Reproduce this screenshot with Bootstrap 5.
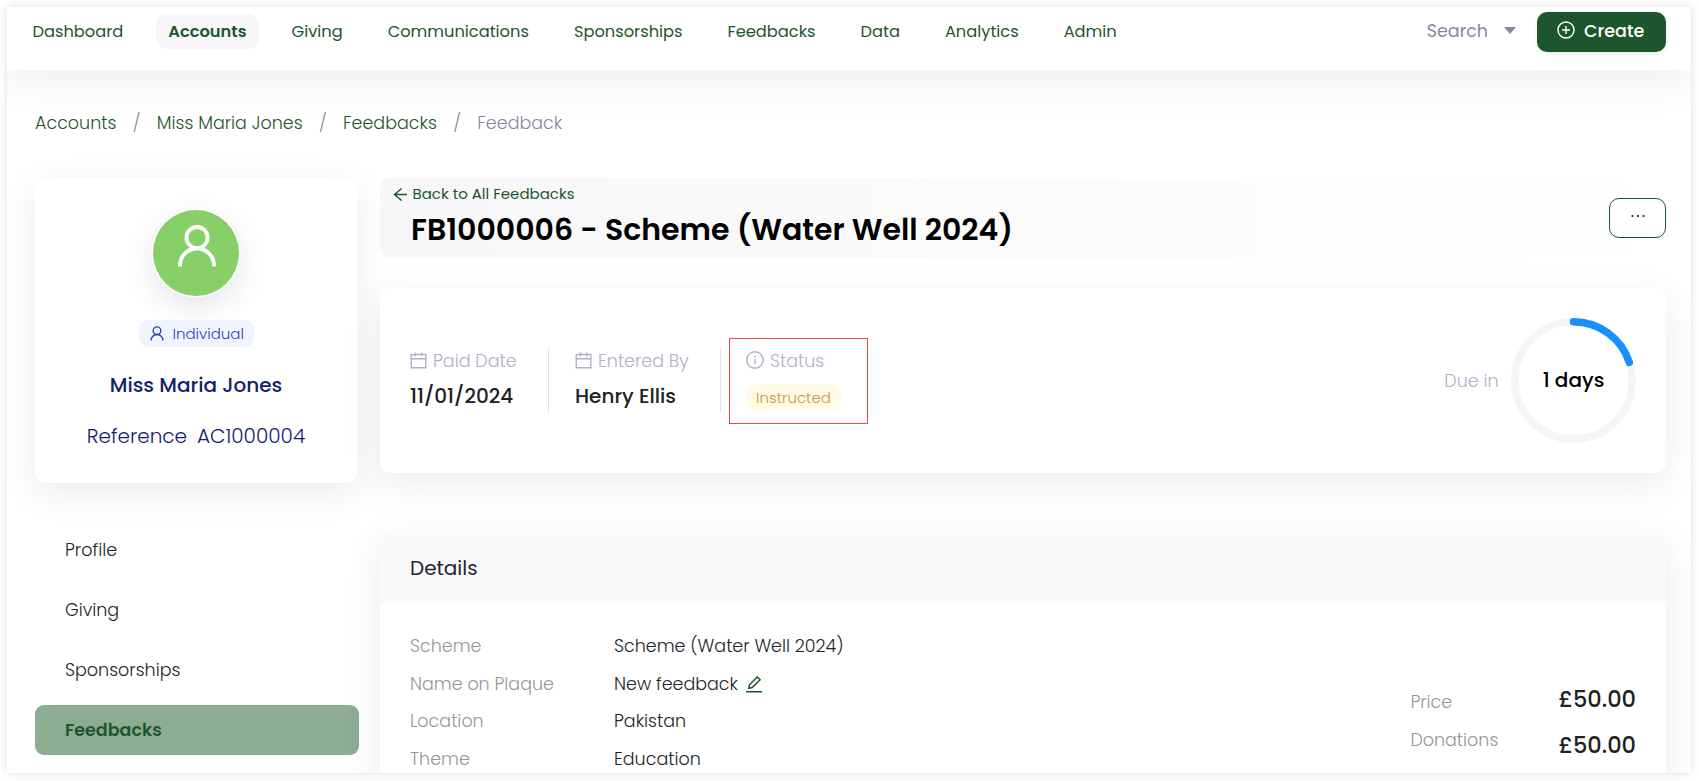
<!DOCTYPE html>
<html lang="en">
<head>
<meta charset="utf-8">
<meta name="viewport" content="width=device-width, initial-scale=1">
<title>FB1000006 - Scheme (Water Well 2024)</title>
<link href="https://cdn.jsdelivr.net/npm/bootstrap@5.3.0/dist/css/bootstrap.min.css" rel="stylesheet">
<style>
:root { --brand: #1d562c; --muted-c: #b0b0c8; --soft: 0 10px 34px rgba(60, 70, 120, .10); }
body { font-family: Poppins, Inter, sans-serif; font-weight: 300; font-size: 17.5px; color: #212529; background: #fff; padding: 7px 8px 8px 7px; height: 781px; overflow: hidden; }
svg { fill: none; stroke: currentColor; flex: none; }
.window { height: 766px; overflow: hidden; background: #fff; box-shadow: 0 0 9px rgba(0, 0, 0, .13); }
.topbar { height: 63px; padding: 0 25px 0 13px; box-shadow: 0 10px 40px rgba(60, 70, 110, .095); position: relative; }
.topbar .nav { gap: 20px; padding-top: 7px; }
.topbar .nav-link { color: var(--brand); font-size: 16.25px; font-weight: 400; line-height: 35px; padding: 0 12.5px; border-radius: 10px; white-space: nowrap; }
.topbar .nav-link.active { background: #f7f7f9; font-weight: 600; }
.search-box { padding-top: 7px; color: #87879f; font-weight: 400; line-height: 35px; }
.caret-down { border: 6.5px solid transparent; border-top: 7px solid #87879f; border-bottom: 0; margin: 0 21px 2px 16px; }
.btn-create { width: 129px; height: 40px; border-radius: 10px; background: var(--brand); color: #fff; font-size: 17.5px; font-weight: 500; padding: 0 0 2px 19px; gap: 9px; margin-top: 5px; box-shadow: 0 2px 4px rgba(0,0,0,.08); }
.btn-create svg { margin-bottom: 2px; }
.content-area { padding: 0 25px 0 28px; }
.crumbs { height: 108px; padding-top: 40px; line-height: 26px; }
.crumbs a { color: var(--brand); text-decoration: none; }
.crumbs .sep { color: #87879f; width: 40.4px; text-align: center; }
.crumbs .here { color: #87879f; }
.side { width: 322px; flex: none; }
.panel { background: #fff; border-radius: 10px; box-shadow: var(--soft); }
.profile { height: 305px; padding-top: 32px; color: #12206f; }
.avatar { width: 86px; height: 86px; border-radius: 50%; padding: 15px 0 0 1px; color: #fff; background: #87d068; box-shadow: 0 0 0 1.5px #fff, 0 10px 30px rgba(60, 40, 110, .14); }
.tag-kind { height: 27px; width: 115px; border-radius: 9px; background: #f0f4ff; color: #2f3ec4; font-size: 15px; margin-top: 24px; padding: 2px 0 0 11px; gap: 9px; }
.tag-kind svg { margin-bottom: 2px; }
.person { font-size: 20px; font-weight: 500; line-height: 30px; margin-top: 23px; }
.refline { font-size: 20px; line-height: 30px; margin-top: 21px; gap: 10px; }
.side-nav { margin-top: 42px; width: 324px; gap: 10px; }
.side-nav .nav-link { height: 50px; line-height: 50px; padding: 0 0 0 30px; color: #212529; border-radius: 9px; }
.side-nav .nav-link.active { background: #8dad92; color: var(--brand); font-weight: 600; }
.main-col { margin-left: 23px; flex: 1; min-width: 0; }
.title-bar { height: 80px; border-radius: 10px; background: linear-gradient(90deg, #f7f7f9, #fff); }
.back { font-size: 15px; font-weight: 400; color: var(--brand); line-height: 20px; padding: 6px 0 0 12.5px; gap: 6px; }
.headline { font-size: 30px; font-weight: 600; color: #000; line-height: 36px; margin: 8px 0 0 31px; }
.btn-more { width: 57px; height: 40px; border: 1px solid var(--brand); border-radius: 10px; background: #fff; color: var(--brand); }
.dots { fill: currentColor; stroke: none; }
.status { height: 185px; margin-top: 30px; padding: 0 30px; }
.stat-item { height: 65px; width: 139px; margin-right: 26px; }
.stat-item + .stat-item { width: 146px; margin-right: 8px; }
.lbl { color: var(--muted-c); line-height: 26px; height: 26px; gap: 6px; }
.lbl svg { margin-bottom: 2px; }
.val { font-size: 20px; font-weight: 500; color: #212121; line-height: 28px; margin-top: 8px; }
.rule { border-right: 1px solid #e2e2ec; }
.flagged { width: 139px; height: 86px; border: 1px solid #f04848; padding: 9px 0 0 16px; }
.tag-status { width: 95px; height: 27px; line-height: 28px; border-radius: 11px; background: #fffbe6; color: #d4932f; font-size: 15px; text-align: center; margin-top: 10px; }
.ring { width: 125px; height: 125px; position: relative; margin-left: 12.5px; }
.ring .days { position: absolute; inset: 0; line-height: 125px; text-align: center; font-size: 20px; font-weight: 500; color: #000; }
.details { margin-top: 59px; height: 400px; }
.details-head { height: 72px; border-radius: 10px 10px 0 0; background: #fafafc; font-size: 20px; font-weight: 400; line-height: 72px; padding-left: 30px; }
.details-body { padding: 24px 30px 0; }
.facts { display: grid; grid-template-columns: 204px auto; grid-auto-rows: 37.5px; line-height: 37.5px; }
.facts dt { font-weight: 300; color: #969696; }
.facts dd { margin: 0; }
.edit-icon { color: var(--brand); }
.sums { margin-top: 55px; }
.sum-labels { width: 148px; line-height: 38px; color: #969696; }
.sum-values { line-height: 46px; font-size: 22.5px; font-weight: 500; color: #212121; margin-top: -7px; }
</style>
</head>
<body>
<div class="window">
  <header class="topbar d-flex">
    <nav class="nav flex-nowrap align-items-start">
      <a class="nav-link" href="#">Dashboard</a>
      <a class="nav-link active" href="#">Accounts</a>
      <a class="nav-link" href="#">Giving</a>
      <a class="nav-link" href="#">Communications</a>
      <a class="nav-link" href="#">Sponsorships</a>
      <a class="nav-link" href="#">Feedbacks</a>
      <a class="nav-link" href="#">Data</a>
      <a class="nav-link" href="#">Analytics</a>
      <a class="nav-link" href="#">Admin</a>
    </nav>
    <div class="ms-auto d-flex align-items-start">
      <div class="search-box d-flex align-items-center"><span>Search</span><span class="caret-down"></span></div>
      <button class="btn btn-create d-flex align-items-center"><svg width="18" height="18" viewBox="0 0 18 18" stroke-width="1.4"><circle cx="9" cy="9" r="8"/><path d="M9 5v8M5 9h8"/></svg><span>Create</span></button>
    </div>
  </header>
  <main class="content-area">
    <div class="crumbs d-flex"><a href="#">Accounts</a><span class="sep">/</span><a href="#">Miss Maria Jones</a><span class="sep">/</span><a href="#">Feedbacks</a><span class="sep">/</span><span class="here">Feedback</span></div>
    <div class="d-flex">
      <aside class="side">
        <div class="panel profile d-flex flex-column align-items-center">
          <div class="avatar d-flex justify-content-center align-items-start"><svg width="40" height="42" viewBox="0 0 40 42" stroke-width="3.8"><circle cx="20" cy="12.6" r="10.6"/><path d="M3 41.5v-1a17 17 0 0 1 34 0v1"/></svg></div>
          <div class="tag-kind d-flex align-items-center"><svg width="14" height="15" viewBox="0 0 14 15" stroke-width="1.4"><circle cx="7" cy="4.7" r="3.8"/><path d="M1 14.4a6 5.9 0 0 1 12 0"/></svg><span>Individual</span></div>
          <div class="person">Miss Maria Jones</div>
          <div class="refline d-flex"><span>Reference</span><span>AC1000004</span></div>
        </div>
        <nav class="side-nav nav flex-column">
          <a class="nav-link" href="#">Profile</a>
          <a class="nav-link" href="#">Giving</a>
          <a class="nav-link" href="#">Sponsorships</a>
          <a class="nav-link active" href="#">Feedbacks</a>
        </nav>
      </aside>
      <section class="main-col">
        <div class="title-bar d-flex justify-content-between align-items-center">
          <div class="align-self-start">
            <div class="back d-flex align-items-center"><svg width="14" height="13" viewBox="0 0 14 13" stroke-width="1.4"><path d="M8.600 .5 1.500 6.500l7.100 6M1.500 6.500H14"/></svg><span>Back to All Feedbacks</span></div>
            <h1 class="headline">FB1000006 - Scheme (Water Well 2024)</h1>
          </div>
          <button class="btn btn-more p-0 d-flex justify-content-center align-items-center"><svg class="dots mb-1" width="14" height="4" viewBox="0 0 14 4"><path d="M.5 1h2v2h-2zM6 1h2v2H6zM11.500 1h2v2h-2z"/></svg></button>
        </div>
        <div class="panel status d-flex align-items-center">
          <div class="stat-item rule">
            <div class="lbl d-flex align-items-center"><svg width="17" height="17" viewBox="0 0 17 17" stroke-width="1.4"><path d="M1.200 2.500h14.600v13.300H1.200zM1.200 6.800h14.600M5.300 .5v4M11.700 .5v4"/></svg><span>Paid Date</span></div>
            <div class="val">11/01/2024</div>
          </div>
          <div class="stat-item rule">
            <div class="lbl d-flex align-items-center"><svg width="17" height="17" viewBox="0 0 17 17" stroke-width="1.4"><path d="M1.200 2.500h14.600v13.300H1.200zM1.200 6.800h14.600M5.300 .5v4M11.700 .5v4"/></svg><span>Entered By</span></div>
            <div class="val">Henry Ellis</div>
          </div>
          <div class="flagged">
            <div class="lbl d-flex align-items-center"><svg width="18" height="18" viewBox="0 0 18 18" stroke-width="1.4"><circle cx="9" cy="9" r="8.200"/><path d="M9 7.800V13M9 4.800v1.600"/></svg><span>Status</span></div>
            <div class="tag-status">Instructed</div>
          </div>
          <div class="lbl ms-auto">Due in</div>
          <div class="ring">
            <svg class="d-block" width="125" height="125" viewBox="0 0 125 125" stroke-width="7.5"><circle cx="62.5" cy="62.5" r="58.7" stroke="#f5f5f5"/><path d="M62.5 3.800A58.700 58.700 0 0 1 118.300 44.400" stroke="#1890ff" stroke-linecap="round"/></svg>
            <div class="days">1 days</div>
          </div>
        </div>
        <div class="panel details">
          <div class="details-head">Details</div>
          <div class="details-body d-flex justify-content-between align-items-start">
            <dl class="facts">
              <dt>Scheme</dt><dd>Scheme (Water Well 2024)</dd>
              <dt>Name on Plaque</dt>
              <dd class="d-flex align-items-center gap-2"><span>New feedback</span><svg class="edit-icon" width="16" height="17" viewBox="0 0 16 17" stroke-width="1.5"><path d="M0 15.700h16M2.800 12.300l.7-3.500L11.300 1l2.800 2.800-7.800 7.800z"/></svg></dd>
              <dt>Location</dt><dd>Pakistan</dd>
              <dt>Theme</dt><dd>Education</dd>
            </dl>
            <div class="sums d-flex align-items-start">
              <div class="sum-labels"><div>Price</div><div>Donations</div></div>
              <div class="sum-values"><div>£50.00</div><div>£50.00</div></div>
            </div>
          </div>
        </div>
      </section>
    </div>
  </main>
</div>
<script src="https://cdn.jsdelivr.net/npm/bootstrap@5.3.0/dist/js/bootstrap.bundle.min.js"></script>
</body>
</html>
